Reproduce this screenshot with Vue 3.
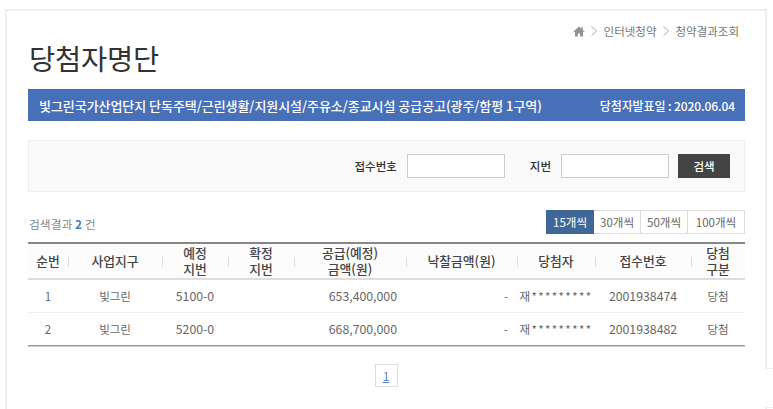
<template>
  <div class="page">
    <div class="frame">
      <div class="crumbs">
        <svg class="home" viewBox="0 0 12 11" width="12" height="11"><path d="M6 0.5 0.3 5.6 1 6.3 2 5.5V10.5H5V7.5H7V10.5H10V5.5L11 6.3 11.7 5.6 9.8 3.9V1H8.4V2.7Z" fill="#8c959c"/></svg>
        <svg class="gt" viewBox="0 0 6 10" width="6" height="10"><path d="M0.5 0.5 5.5 5 0.5 9.5" fill="none" stroke="#aaa"/></svg>
        <span>인터넷청약</span>
        <svg class="gt" viewBox="0 0 6 10" width="6" height="10"><path d="M0.5 0.5 5.5 5 0.5 9.5" fill="none" stroke="#aaa"/></svg>
        <span>청약결과조회</span>
      </div>
      <h1>당첨자명단</h1>
      <div class="banner">
        <span class="notice">빛그린국가산업단지 단독주택/근린생활/지원시설/주유소/종교시설 공급공고(광주/함평 1구역)</span>
        <span class="notice-date">당첨자발표일 : 2020.06.04</span>
      </div>
      <div class="search">
        <label>접수번호</label>
        <input class="field first" type="text" />
        <label>지번</label>
        <input class="field second" type="text" />
        <button class="go">검색</button>
      </div>
      <div class="tools">
        <div class="count">검색결과 <b>2</b> 건</div>
        <div class="sizes">
          <a v-for="(s, i) in sizes" :key="s" :class="{ on: i === 0 }">{{ s }}</a>
        </div>
      </div>
      <table>
        <colgroup>
          <col v-for="w in widths" :key="w.k" :style="{ width: w.v + 'px' }" />
        </colgroup>
        <thead>
          <tr>
            <th v-for="h in heads" :key="h"><span class="cell" v-html="h"></span></th>
          </tr>
        </thead>
        <tbody>
          <tr v-for="r in rows" :key="r.no">
            <td>{{ r.no }}</td>
            <td>{{ r.area }}</td>
            <td class="num">{{ r.lot }}</td>
            <td></td>
            <td class="num amt">{{ r.price }}</td>
            <td class="dash">-</td>
            <td class="winner">{{ r.winner }}</td>
            <td class="num">{{ r.rcpt }}</td>
            <td>당첨</td>
          </tr>
        </tbody>
      </table>
      <div class="pager"><a>1</a></div>
      <div class="notch"></div>
    </div>
  </div>
</template>

<script setup>
const sizes = ['15개씩', '30개씩', '50개씩', '100개씩']
const widths = [40, 94, 66, 66, 112, 111, 78, 96, 54].map((v, k) => ({ k, v }))
const heads = ['순번', '사업지구', '예정<br>지번', '확정<br>지번', '공급(예정)<br>금액(원)', '낙찰금액(원)', '당첨자', '접수번호', '당첨<br>구분']
const rows = [
  { no: 1, area: '빛그린', lot: '5100-0', price: '653,400,000', winner: '재*********', rcpt: '2001938474' },
  { no: 2, area: '빛그린', lot: '5200-0', price: '668,700,000', winner: '재*********', rcpt: '2001938482' }
]
</script>

<style>
html, body { margin: 0; background: #fff; overflow: hidden; }
</style>

<style scoped>
.page { height: 409px; padding: 9px 6px 0 5px; box-sizing: border-box; overflow: hidden; font-family: "Noto Sans CJK KR", "Noto Sans", sans-serif; font-size: 11.5px; color: #555; }
.frame { position: relative; height: 420px; border: 2px solid #eeeeee; background: #fff; padding: 0 20px 0 21px; box-sizing: border-box; }
.crumbs { display: flex; justify-content: flex-end; align-items: center; height: 20px; padding: 10px 6px 0 0; color: #777; font-size: 11.5px; }
.gt { margin: 0 7px 0 6px; }
h1 { margin: 0; height: 48px; font-size: 28.5px; line-height: 34px; font-weight: 400; color: #333; letter-spacing: -0.2px; padding-left: 1px; box-sizing: border-box; }
.banner { display: flex; justify-content: space-between; align-items: center; height: 32px; padding: 0 10px 0 11px; background: #4870b8; color: #fff; font-size: 12px; font-weight: 500; }
.notice { font-size: 13px; letter-spacing: -0.05px; }
.notice-date { letter-spacing: -0.1px; }
.search { display: flex; align-items: center; justify-content: flex-end; height: 52px; box-sizing: border-box; margin-top: 19px; padding-right: 14px; background: #fafafa; border: 1px solid #eee; }
.search label { color: #333; font-size: 11.5px; font-weight: 500; }
.field { height: 24px; box-sizing: border-box; border: 1px solid #ccc; background: #fff; padding: 0; }
.first { width: 98px; margin: 0 25px 0 10px; }
.second { width: 108px; margin: 0 9px 0 10px; }
.go { width: 52px; height: 24px; border: 0; background: #444; color: #fff; font: inherit; font-weight: 500; padding: 0; }
.tools { display: flex; justify-content: space-between; align-items: center; height: 24px; margin-top: 18px; }
.count { color: #888; font-size: 11.8px; padding: 2px 0 0 1px; }
.count b { color: #3f7fd0; }
.sizes { display: flex; }
.sizes a { box-sizing: border-box; height: 24px; line-height: 22px; text-align: center; border: 1px solid #ddd; border-left: 0; color: #666; width: 47px; }
.sizes a:last-child { width: 57px; }
.sizes a.on { width: 48px; background: #3f6797; border: 1px solid #3f6797; color: #fff; }
table { width: 717px; margin-top: 8px; border-collapse: collapse; table-layout: fixed; border-bottom: 1px solid #999; box-shadow: 0 1px 0 #ccc; }
thead th { height: 34px; padding: 0; background: #fcfcfc; border-top: 2px solid #888; border-bottom: 2px solid #ddd; color: #444; font-size: 12.8px; font-weight: 500; line-height: 16px; }
tbody td { height: 32px; padding: 0; text-align: center; color: #666; font-size: 11.5px; border-bottom: 1px solid #eee; }
tbody tr:last-child td { border-bottom: 0; }
th { position: relative; }
th + th::before { content: ""; position: absolute; left: 0; top: 13px; height: 10px; border-left: 1px solid #ddd; }
td.num { font-size: 12.3px; }
td.amt { text-align: right; padding-right: 9px; box-sizing: border-box; }
td.dash { text-align: right; padding-right: 9px; box-sizing: border-box; }
td.winner { letter-spacing: 1.4px; }
.pager { display: flex; justify-content: center; margin-top: 18px; padding-right: 1px; }
.pager a { box-sizing: border-box; width: 23px; height: 23px; line-height: 21px; border: 1px solid #ddd; text-align: center; color: #5a80c4; text-decoration: underline; font-size: 12px; }
.notch { position: absolute; right: -8px; top: 357px; width: 8px; height: 38px; border-top: 1px solid #eee; border-bottom: 1px solid #eee; background: #fff; box-shadow: -2px 0 0 #fff; }
</style>
